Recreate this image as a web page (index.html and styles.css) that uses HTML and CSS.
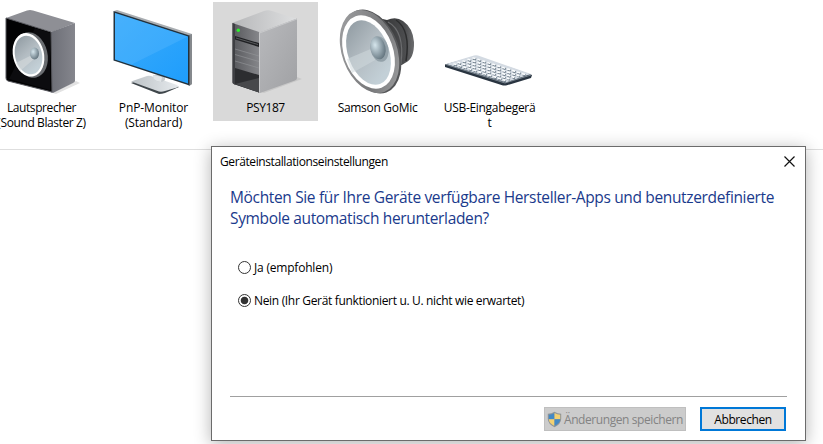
FILE: index.html
```html
<!DOCTYPE html>
<html lang="de">
<head>
  <meta charset="UTF-8" />
  <title>Geräte und Drucker</title>
  <link rel="stylesheet" href="styles.css">
</head>
<body>
  <div class="devices">
    <div class="device">
      <svg class="device-icon" viewBox="-11 2 105 98">
        <defs>
          <linearGradient id="boxSide" x1="0" y1="0" x2="1" y2="0"><stop offset="0" stop-color="#6c6e76"/><stop offset="1" stop-color="#85868d"/></linearGradient>
          <linearGradient id="cone" x1="0" y1="0" x2=".4" y2="1"><stop offset="0" stop-color="#8c979e"/><stop offset=".55" stop-color="#b3bcc2"/><stop offset="1" stop-color="#c3d0d7"/></linearGradient>
          <radialGradient id="ball" cx=".35" cy=".35" r=".7"><stop offset="0" stop-color="#d5e5ec"/><stop offset="1" stop-color="#63747e"/></radialGradient>
        </defs>
        <path d="M53 93 L76 81 L80 83 L56 94Z" fill="#e2e2e2"/>
        <path d="M6 18 L27 10.500 Q30 9.500 33 10.500 L75 23 L52 32Z" fill="#8e8f95"/>
        <path d="M51 32 L75 23 L75 81 Q75 82 73 83 L53 93 L50 92Z" fill="url(#boxSide)"/>
        <path d="M6 18 L51 32 L52 92 L8 81 Q6 80.500 6 78Z" fill="#020203" stroke="#55565c"/>
        <path d="M35 28 L50 33 V90 L9 79Z" fill="#24262b" opacity=".3"/>
        <ellipse cx="31" cy="55" rx="16.500" ry="23" transform="rotate(-13 31 55)" fill="#6a6d71"/>
        <ellipse cx="28.500" cy="54.800" rx="15.500" ry="22" transform="rotate(-13 28.500 54.800)" fill="#fff"/>
        <ellipse cx="28.500" cy="55" rx="13.500" ry="19.500" transform="rotate(-13 28.500 55)" fill="url(#cone)"/>
        <path d="M16 63 L32 55 L34 59 L20 71Z" fill="#d5dadc" opacity=".6"/>
        <ellipse cx="34.500" cy="53.500" rx="4.500" ry="6" fill="url(#ball)"/>
      </svg>
      <span class="device-name">Lautsprecher<br>(Sound Blaster Z)</span>
    </div>
    <div class="device">
      <svg class="device-icon" viewBox="101 2 105 98">
        <defs>
          <linearGradient id="screen" x1="0" y1="0" x2="1" y2="1"><stop offset="0" stop-color="#3cacfb"/><stop offset="1" stop-color="#1e9dfc"/></linearGradient>
          <linearGradient id="foot" x1="0" y1="0" x2="1" y2="0"><stop offset="0" stop-color="#bcc2c6"/><stop offset="1" stop-color="#e6eaed"/></linearGradient>
        </defs>
        <path d="M131 83 L148 77 L179 87 L165 93 Q162 94 159 94Z" fill="#3f464b"/>
        <path d="M131 81.500 L147 76 Q149 75.500 151 76 L177 85 Q179 86.500 177 87.500 L165 91 Q162 92 159 91.500Z" fill="url(#foot)"/>
        <path d="M153 75 H165 V80 Q161 84 155 80Z" fill="#c5cbcf"/>
        <path d="M153 75 L162 77 L161 82 Q157 82 154 79Z" fill="#e2e6e8"/>
        <path d="M114 11 L117 10 L192 34 L192 84 L189 86Z" fill="#a9adb1"/>
        <path d="M189 35 L192 34 V84 L189 86Z" fill="#85898d"/>
        <path d="M113.500 11 L189.500 35.500 V85.500 L113.500 60.500Z" fill="#22323e"/>
        <path d="M115 13 L188 36.500 V83.500 L115 59.500Z" fill="url(#screen)"/>
        <path d="M115 13 L188 36.500 L131 64.700 L115 59.500Z" fill="#5bbaff" opacity=".35"/>
      </svg>
      <span class="device-name name-monitor">PnP-Monitor<br>(Standard)</span>
    </div>
    <div class="device selected">
      <svg class="device-icon" viewBox="213 2 105 98">
        <defs>
          <linearGradient id="towerTop" x1="0" y1="0" x2="1" y2="0"><stop offset="0" stop-color="#b6b7b9"/><stop offset="1" stop-color="#dedfe0"/></linearGradient>
          <linearGradient id="towerSide" x1="0" y1="0" x2="1" y2="1"><stop offset="0" stop-color="#b9babd"/><stop offset="1" stop-color="#a0a1a4"/></linearGradient>
          <linearGradient id="towerFront" x1="0" y1="0" x2="1" y2="0"><stop offset="0" stop-color="#57585c"/><stop offset="1" stop-color="#85868a"/></linearGradient>
        </defs>
        <path d="M260 92 L297 77 L302 79 L264 93Z" fill="#c8c8c8"/>
        <path d="M232 23 L264 11 Q268 9.500 272 11 L297 19 L259 33Z" fill="url(#towerTop)"/>
        <path d="M258 33 L297 18.500 V78 Q297 79.500 295 80.500 L260 93 L258 92Z" fill="url(#towerSide)"/>
        <path d="M259.500 92 V33 L297 19" fill="none" stroke="#c8c9cb"/>
        <path d="M232.500 23 L259 32 V92.500 L234 84 Q232.500 83.500 232.500 82Z" fill="url(#towerFront)"/>
        <path d="M232.500 23 L235 24 V85 L232.500 83Z" fill="#3e3f43"/>
        <path d="M235 36 L259 43 V47 L235 39.500Z" fill="#1f2023"/>
        <path d="M236 38 L258 44.500" stroke="#717276" stroke-width=".7"/>
        <path d="M235 49 L259 56 M235 54.500 L259 61.500 M235 61 L259 68" stroke="#96979b" stroke-width=".6"/>
        <path d="M235 68 L259 75 V92.500 L235 84.500Z" fill="#2c2d30"/>
        <path d="M235 84 L259 78 V92.500Z" fill="#47484b"/>
        <circle cx="238.300" cy="30.300" r="1.700" fill="#2bf22b"/>
      </svg>
      <span class="device-name">PSY187</span>
    </div>
    <div class="device">
      <svg class="device-icon" viewBox="325 2 105 98">
        <defs>
          <linearGradient id="magnet" x1="0" y1="0" x2="1" y2="0"><stop offset="0" stop-color="#303132"/><stop offset=".75" stop-color="#4c4d4f"/><stop offset="1" stop-color="#6b6c6e"/></linearGradient>
          <linearGradient id="rim" x1="0" y1="0" x2="1" y2="1"><stop offset="0" stop-color="#a4a5a7"/><stop offset=".6" stop-color="#77787a"/><stop offset="1" stop-color="#a6a7a8"/></linearGradient>
        </defs>
        <path d="M378 18 L387 20 Q396 16 403 21 Q413 28 414 42 Q414.500 59 405 63 Q400 67 390 67Z" fill="url(#magnet)"/>
        <path d="M388 22 Q405 31 401 64" fill="none" stroke="#6c6d6f" stroke-width="1.200"/>
        <path d="M396 20 Q411 30 406 61" fill="none" stroke="#2c2d2e" stroke-width="1.500"/>
        <ellipse cx="371.500" cy="51.500" rx="27.500" ry="43.500" transform="rotate(-20 371.500 51.500)" fill="#555658"/>
        <ellipse cx="369.500" cy="51.500" rx="27.500" ry="43" transform="rotate(-20 369.500 51.500)" fill="url(#rim)"/>
        <ellipse cx="368.500" cy="52" rx="24.500" ry="38" transform="rotate(-20 368.500 52)" fill="#fff"/>
        <ellipse cx="368.500" cy="52.500" rx="20.500" ry="33.500" transform="rotate(-20 368.500 52.500)" fill="url(#cone)"/>
        <path d="M347 59 L373 48 L377 59 L352 73Z" fill="#d0d8dc" opacity=".55"/>
        <ellipse cx="379.500" cy="49" rx="9" ry="13" transform="rotate(-12 379.500 49)" fill="#93a1a9"/>
        <ellipse cx="378" cy="48" rx="7.500" ry="11.500" transform="rotate(-12 378 48)" fill="url(#ball)"/>
      </svg>
      <span class="device-name name-mic">Samson GoMic</span>
    </div>
    <div class="device">
      <svg class="device-icon" viewBox="437 2 105 98">
        <path d="M445 64.500 L476 56 L532 75 L531 78 L506 85.500 L503 85.500 L445 67Z" fill="#293440"/>
        <path d="M446 64 L474 55.500 Q476 55 478 55.500 L531 74 L506 82.500Z" fill="#d3dae2"/>
        <path d="M446 64.500 L505 83 L531 75" fill="none" stroke="#8e9aa5" stroke-width=".8"/>
        <g stroke="#647482" stroke-width="2" stroke-dasharray="3.200 2">
          <path d="M473 58.500 L526 75.500"/>
          <path d="M468 60 L520 76.700"/>
          <path d="M463 61.500 L515 78.200"/>
          <path d="M458 63 L510 79.700"/>
          <path d="M454 64.500 L506 81.200"/>
        </g>
        <g stroke="#fafcfd" stroke-width="1.700" stroke-dasharray="3.200 2">
          <path d="M472.500 57.700 L525.500 74.700"/>
          <path d="M467.500 59.200 L519.500 75.900"/>
          <path d="M462.500 60.700 L514.500 77.400"/>
          <path d="M457.500 62.200 L509.500 78.900"/>
          <path d="M453.500 63.700 L505.500 80.400"/>
        </g>
      </svg>
      <span class="device-name name-usb">USB-Eingabegerä<br>t</span>
    </div>
  </div>

  <div class="dialog">
    <div class="title-bar">
      <span class="title">Geräteinstallationseinstellungen</span>
      <svg class="close" width="11" height="11" viewBox="0 0 11 11"><path d="M.5 .5 L10.500 10.500 M10.500 .5 L.5 10.500" stroke="#111" stroke-width="1.200"/></svg>
    </div>
    <div class="dialog-body">
      <h1>Möchten Sie für Ihre Geräte verfügbare Hersteller-Apps und benutzerdefinierte<br>Symbole automatisch herunterladen?</h1>
      <label class="option"><input type="radio" name="apps"><span class="option-yes">Ja (empfohlen)</span></label>
      <label class="option"><input type="radio" name="apps" checked><span>Nein (Ihr Gerät funktioniert u. U. nicht wie erwartet)</span></label>
    </div>
    <div class="dialog-footer">
      <button class="save" disabled>
        <svg width="15" height="17" viewBox="0 0 15 17">
          <path d="M7.500 .7 Q10.500 2.800 14.200 2.800 V8 Q14 13 7.500 16.300 Q1 13 .8 8 V2.800 Q4.500 2.800 7.500 .7Z" fill="#8f9498"/>
          <path d="M7.500 2 V8.300 H1.800 V3.700 Q5 3.700 7.500 2Z" fill="#4389c5"/>
          <path d="M7.500 2 V8.300 H13.200 V3.700 Q10 3.700 7.500 2Z" fill="#f3d172"/>
          <path d="M1.800 8.300 H7.500 V15 Q2 12.500 1.800 8.300Z" fill="#f3d172"/>
          <path d="M13.200 8.300 H7.500 V15 Q13 12.500 13.200 8.300Z" fill="#4389c5"/>
        </svg>
        <span>Änderungen speichern</span>
      </button>
      <button class="cancel">Abbrechen</button>
    </div>
  </div>
</body>
</html>
```
FILE: styles.css
```css
* {
  box-sizing: border-box;
}
body {
  margin: 0;
  height: 444px;
  overflow: hidden;
  background: #fff;
  color: #000;
  font-family: "Open Sans", "Noto Sans", sans-serif;
  font-size: 12px;
  letter-spacing: -0.33px;
}
.devices {
  display: flex;
  gap: 7px;
  height: 150px;
  padding-top: 2px;
  border-bottom: 1px solid #dedede;
}
.device {
  flex: none;
  width: 105px;
  height: 119px;
  text-align: center;
}
.device:first-child {
  margin-left: -11px;
}
.device.selected {
  background: #d9d9d9;
}
.device-icon {
  display: block;
  width: 105px;
  height: 98px;
}
.device-name {
  display: block;
  line-height: 15px;
  letter-spacing: -0.4px;
  white-space: nowrap;
}
.name-monitor {
  letter-spacing: -0.1px;
}
.name-mic,
.name-usb {
  letter-spacing: -0.3px;
}
.dialog {
  position: absolute;
  left: 211px;
  top: 146px;
  width: 595px;
  height: 295px;
  display: flex;
  flex-direction: column;
  background: #fff;
  border: 1px solid #6b6b6b;
  box-shadow: 0 3px 16px rgba(0,0,0,0.3);
}
.title-bar {
  display: flex;
  justify-content: space-between;
  align-items: center;
  height: 29px;
  padding: 0 10px 0 8px;
}
.title {
  letter-spacing: -0.4px;
}
.dialog-body {
  flex: 1;
  padding: 11px 18px 0;
}
h1 {
  margin: 0 0 30px;
  color: #1a3a8c;
  font-size: 15.5px;
  font-weight: normal;
  letter-spacing: -0.35px;
  line-height: 21px;
  white-space: nowrap;
}
.option {
  display: flex;
  align-items: center;
  height: 17px;
  margin: 0 0 16px 8px;
  white-space: nowrap;
}
.option input {
  appearance: none;
  width: 13px;
  height: 13px;
  margin: 0 3px 0 0;
  border: 1px solid #333;
  border-radius: 50%;
  background: #fff;
}
.option input:checked {
  background: radial-gradient(circle, #333 3.4px, #fff 4.2px);
}
.option-yes {
  letter-spacing: -0.2px;
}
.dialog-footer {
  display: flex;
  justify-content: flex-end;
  gap: 14px;
  height: 44px;
  margin: 0 18px;
  padding: 10px 1px 0 0;
  border-top: 1px solid #a0a0a0;
}
button {
  height: 24px;
  padding: 0;
  border-radius: 0;
  font: inherit;
  letter-spacing: -0.42px;
  white-space: nowrap;
}
.save {
  display: flex;
  align-items: center;
  gap: 2px;
  width: 142px;
  padding-left: 2px;
  background: #ccc;
  border: 1px solid #bfbfbf;
  color: #838383;
}
.cancel {
  width: 86px;
  background: #e1e1e1;
  border: 2px solid #0078d7;
  color: #000;
}
```
